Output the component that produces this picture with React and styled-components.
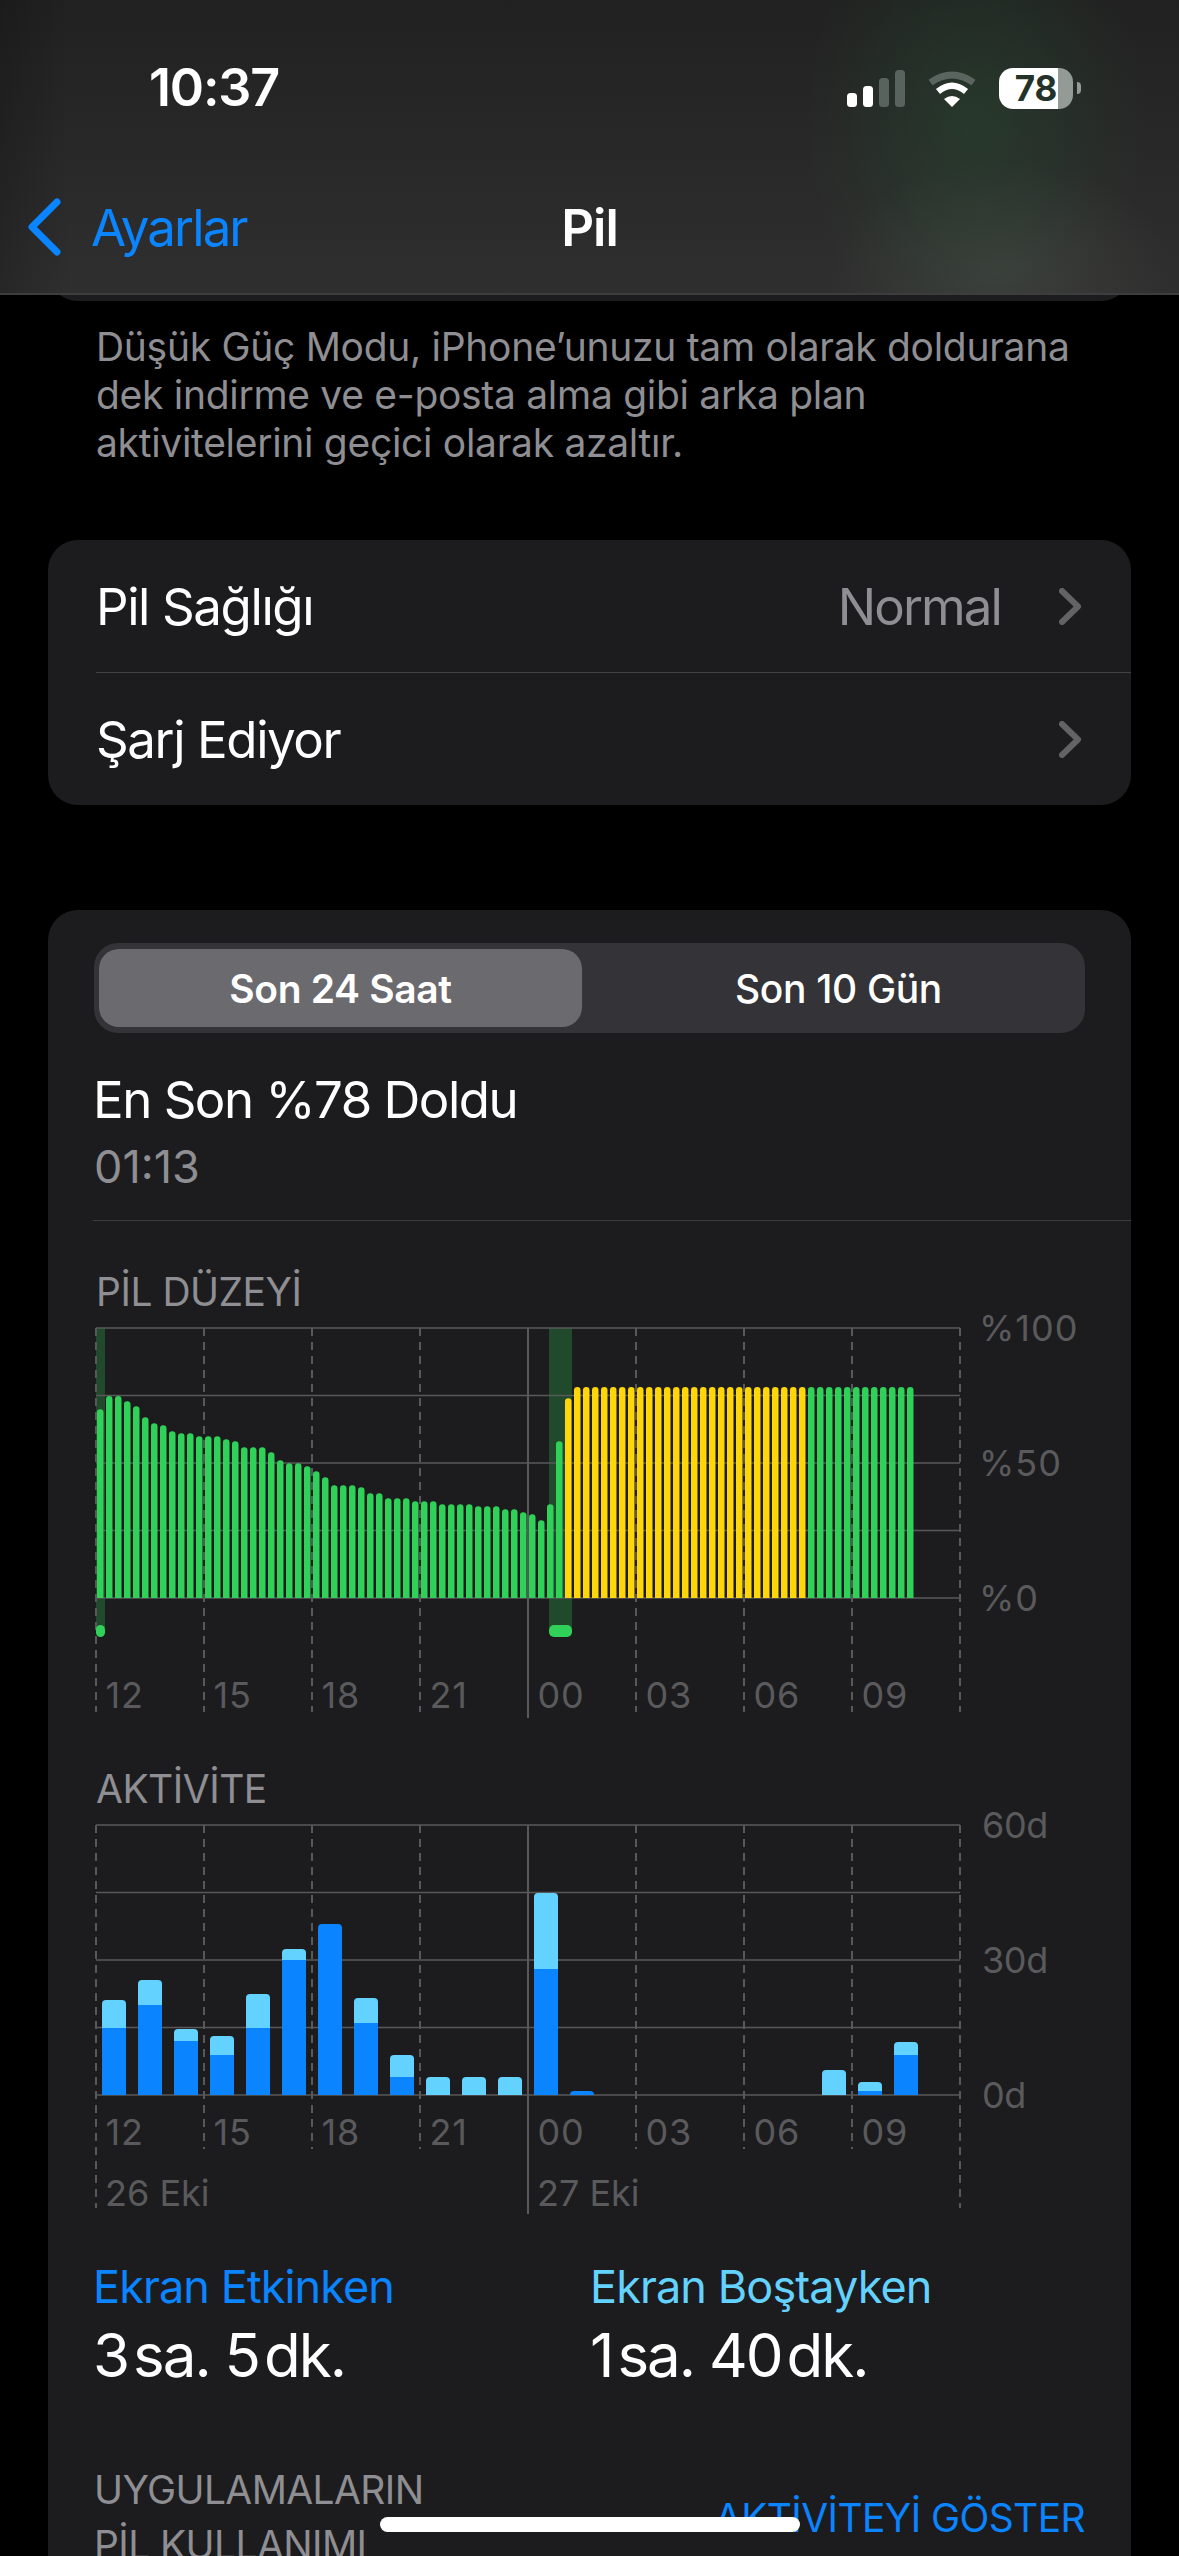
import React from 'react'
import styled, { createGlobalStyle } from 'styled-components'

const GlobalStyle = createGlobalStyle`
  html, body {
    margin: 0;
    padding: 0;
    background: #000;
  }
  body {
    font-family: Inter, "Noto Sans", "Liberation Sans", sans-serif;
    -webkit-font-smoothing: antialiased;
  }
`

const Page = styled.div`
  position: relative;
  width: 1179px;
  height: 2556px;
  overflow: hidden;
  background: #000;
  color: #fff;
`

const Header = styled.header`
  position: relative;
  z-index: 2;
  height: 295px;
  box-sizing: border-box;
  border-bottom: 2px solid #3d3d3d;
  background:
    radial-gradient(ellipse 170px 240px at 975px 120px, rgba(40, 80, 50, 0.42), rgba(40, 80, 50, 0) 100%),
    radial-gradient(ellipse 170px 110px at 1000px 270px, rgba(90, 90, 85, 0.35), rgba(90, 90, 85, 0) 100%),
    linear-gradient(90deg, rgba(0, 0, 0, 0.18), rgba(0, 0, 0, 0) 70px),
    linear-gradient(180deg, #212121 0%, #2f2f2f 100%);
`

const StatusRow = styled.div`
  display: flex;
  align-items: center;
  justify-content: space-between;
  padding: 53px 98px 0 149px;
  height: 70px;
`

const Time = styled.div`
  font-size: 52px;
  font-weight: 600;
  line-height: 70px;
  letter-spacing: -1.2px;
`

const StatusIcons = styled.div`
  display: flex;
  align-items: center;
  gap: 22px;
`

const Battery = styled.div`
  position: relative;
  width: 74px;
  height: 41px;
  border-radius: 14px;
  background: linear-gradient(90deg, #fff 59px, #949b97 59px);
  color: #24332a;
  font-size: 35px;
  font-weight: 700;
  line-height: 41px;
  text-align: center;
  margin-right: 8px;

  &::after {
    content: '';
    position: absolute;
    right: -8px;
    top: 14px;
    width: 4px;
    height: 12px;
    border-radius: 0 6px 6px 0;
    background: #949b97;
  }
`

const NavRow = styled.nav`
  display: grid;
  grid-template-columns: 1fr auto 1fr;
  align-items: center;
  height: 62px;
  margin-top: 73px;
`

const BackLink = styled.div`
  display: flex;
  align-items: center;
  gap: 30px;
  padding-left: 28px;
  color: #0a84ff;
  font-size: 51px;
  letter-spacing: -1.9px;
`

const NavTitle = styled.div`
  font-size: 51px;
  font-weight: 600;
  letter-spacing: -1px;
`

const Sliver = styled.div`
  height: 32px;
  margin: -26px 48px 0;
  border-radius: 0 0 30px 30px;
  background: #1c1c1e;
`

const Footnote = styled.p`
  margin: 22px 60px 0 96px;
  color: #8e8e93;
  font-size: 39px;
  line-height: 48px;
  letter-spacing: -0.3px;
  white-space: nowrap;
`

const Card = styled.section`
  margin: ${p => p.$top}px 48px 0;
  border-radius: 30px;
  background: #1c1c1e;
  overflow: hidden;
`

const Row = styled.div`
  display: flex;
  align-items: center;
  justify-content: space-between;
  height: 132px;
  padding: 0 49px 0 48px;
  font-size: 51px;
  letter-spacing: -1.4px;
`

const RowValue = styled.span`
  display: flex;
  align-items: center;
  gap: 58px;
  color: #8e8e93;
  letter-spacing: -1.9px;
`

const RowDivider = styled.div`
  height: 1px;
  margin-left: 48px;
  background: #434345;
`

const DetailCard = styled(Card)`
  padding-top: 33px;
  height: 1700px;
`

const Segments = styled.div`
  display: grid;
  grid-template-columns: 1fr 1fr;
  column-gap: 15px;
  height: 90px;
  box-sizing: border-box;
  margin: 0 46px;
  padding: 6px 5px;
  border-radius: 24px;
  background: #333338;
`

const Segment = styled.div`
  display: flex;
  align-items: center;
  justify-content: center;
  border-radius: 20px;
  background: ${p => (p.$active ? '#6a6a6f' : 'transparent')};
  font-size: 39px;
  font-weight: ${p => (p.$active ? 600 : 500)};
  letter-spacing: -0.35px;
`

const ChargeTitle = styled.div`
  margin: 37px 45px 0;
  font-size: 51px;
  line-height: 60px;
  letter-spacing: -1.5px;
`

const ChargeTime = styled.div`
  margin: 10px 46px 0;
  color: #8e8e93;
  font-size: 45px;
  line-height: 54px;
  letter-spacing: 0;
`

const Separator = styled.div`
  height: 1px;
  margin: 26px 0 0 45px;
  background: #3c3c3e;
`

const ChartLabel = styled.div`
  margin: ${p => p.$top}px 48px 0;
  color: #8e8e93;
  font-size: 39px;
  line-height: 48px;
  letter-spacing: -0.5px;
`

const ChartSvg = styled.svg`
  display: block;
  overflow: visible;

  text {
    fill: #5a5a5d;
    font-size: 36px;
  }
`

const Totals = styled.div`
  display: grid;
  grid-template-columns: 497px 1fr;
  margin: 44px 45px 0;
`

const TotalName = styled.div`
  color: ${p => p.$color};
  font-size: 45px;
  line-height: 54px;
  letter-spacing: -0.9px;
`

const TotalValue = styled.div`
  margin-top: 5px;
  font-size: 60px;
  line-height: 72px;
  letter-spacing: -2px;
`

const Unit = styled.span`
  margin-left: 5px;
`

const UsageRow = styled.div`
  display: flex;
  align-items: center;
  justify-content: space-between;
  margin: 71px 46px 0;
`

const UsageTitle = styled.div`
  color: #8e8e93;
  font-size: 39px;
  line-height: 55px;
  letter-spacing: -0.6px;
`

const UsageLink = styled.div`
  color: #0a84ff;
  font-size: 39px;
  letter-spacing: -0.6px;
`

const HomeIndicator = styled.div`
  position: absolute;
  left: 380px;
  top: 2517px;
  width: 420px;
  height: 15px;
  border-radius: 8px;
  background: #fff;
`

// tops read off the reference, px above the 0 line
const levelTops = [478, 438, 438, 454, 469, 502, 520, 526, 544, 550, 550, 559, 559, 559, 568, 574, 592, 592, 592, 607, 631, 640, 640, 649, 664, 682, 706, 706, 706, 712, 730, 730, 745, 745, 745, 754, 754, 754, 763, 763, 763, 763, 769, 769, 769, 778, 778, 787, 793, 811, 763, 574]
const levels = [
  ...levelTops.map(t => ({ h: (1044 - t) / 3, color: '#30d158' })),
  { h: (1044 - 445) / 3, color: '#ffd60a' },
  ...Array(26).fill({ h: 211, color: '#ffd60a' }),
  ...Array(12).fill({ h: 211, color: '#30d158' }),
]

// [bar index, total height, screen-on height]
const activity = [
  [0, 95, 67], [1, 115, 90], [2, 66, 54], [3, 59, 40], [4, 101, 67], [5, 146, 135],
  [6, 171, 171], [7, 97, 72], [8, 40, 18], [9, 18, 0], [10, 18, 0], [11, 18, 0],
  [12, 202, 126], [13, 4, 4], [20, 25, 0], [21, 13, 4], [22, 53, 40],
]

const hours = ['12', '15', '18', '21', '00', '03', '06', '09']
const LEFT = 48
const columnX = i => 96 + 108 * i - LEFT

const topRounded = (x, bottom, w, h, r) => {
  const rr = Math.min(r, h)
  return `M${x} ${bottom}V${bottom - h + rr}Q${x} ${bottom - h} ${x + rr} ${bottom - h}H${x + w - rr}Q${x + w} ${bottom - h} ${x + w} ${bottom - h + rr}V${bottom}Z`
}

const Grid = ({ top, dashEnd, edgeEnd, solidEnd }) => (
  <g stroke="#58585a">
    {[0, 1, 2, 3, 4].map(i => (
      <line key={i} x1={columnX(0)} x2={columnX(8)} y1={top + 67.5 * i} y2={top + 67.5 * i} strokeWidth="1.6" />
    ))}
    {[0, 1, 2, 3, 5, 6, 7, 8].map(i => (
      <line
        key={i}
        x1={columnX(i)}
        x2={columnX(i)}
        y1={top}
        y2={i === 0 || i === 8 ? edgeEnd : dashEnd}
        strokeWidth="2"
        strokeDasharray="8 6"
      />
    ))}
    <line x1={columnX(4)} x2={columnX(4)} y1={top} y2={solidEnd} strokeWidth="2" />
  </g>
)

const HourLabels = ({ y }) =>
  hours.map((h, i) => (
    <text key={h} x={columnX(i) + 9.5} y={y} letterSpacing="0.8">{h}</text>
  ))

const AxisLabels = ({ labels, top, x, tracking }) =>
  labels.map((l, i) => (
    <text key={l} x={x - LEFT} y={top + 135 * i + 13} letterSpacing={tracking}>{l}</text>
  ))

const LevelChart = () => (
  <ChartSvg width="1083" height="404">
    <rect x={96 - LEFT} y="12" width="9" height="300" fill="#214a2c" />
    <rect x={549 - LEFT} y="12" width="23" height="300" fill="#214a2c" />
    <Grid top={12} dashEnd={396} edgeEnd={396} solidEnd={402} />
    {levels.map((b, i) => (
      <path key={i} d={topRounded(97 + 9 * i - LEFT, 282, 6.5, b.h, 3.2)} fill={b.color} />
    ))}
    <rect x={96 - LEFT} y="309" width="9" height="12" rx="4.5" fill="#30d158" />
    <rect x={549 - LEFT} y="309" width="23" height="12" rx="5" fill="#30d158" />
    <HourLabels y={392} />
    <AxisLabels labels={['%100', '%50', '%0']} top={12} x={979} tracking="1" />
  </ChartSvg>
)

const ActivityChart = () => (
  <ChartSvg width="1083" height="403">
    <Grid top={12} dashEnd={336} edgeEnd={395} solidEnd={401} />
    {activity.map(([i, total, on]) => {
      const x = 102 + 36 * i - LEFT
      return (
        <g key={i}>
          <path d={topRounded(x, 282, 24, total, 4)} fill={on === total ? '#0a84ff' : '#64d2ff'} />
          {on > 0 && on < total && <rect x={x} y={282 - on} width="24" height={on} fill="#0a84ff" />}
        </g>
      )
    })}
    <HourLabels y={332} />
    <text x={columnX(0) + 9} y="393">26 Eki</text>
    <text x={columnX(4) + 9} y="393">27 Eki</text>
    <AxisLabels labels={['60d', '30d', '0d']} top={12} x={982} tracking="-0.4" />
  </ChartSvg>
)

const Chevron = ({ tone }) => (
  <svg width="23" height="37" viewBox="0 0 23 37" fill="none">
    <path d="M3 3l16 15.500L3 34" stroke={tone} strokeWidth="6" strokeLinecap="round" strokeLinejoin="round" />
  </svg>
)

const BackChevron = () => (
  <svg width="33" height="58" viewBox="0 0 33 58" fill="none">
    <path d="M29 4L4 29l25 25" stroke="#0a84ff" strokeWidth="7" strokeLinecap="round" strokeLinejoin="round" />
  </svg>
)

const Signal = () => (
  <svg width="58" height="37" viewBox="0 0 58 37">
    <rect x="0" y="23" width="10" height="14" rx="3.500" fill="#fff" />
    <rect x="16" y="16" width="10" height="21" rx="3.500" fill="#fff" />
    <rect x="32" y="8" width="10" height="29" rx="3.500" fill="#57635c" />
    <rect x="48" y="0" width="10" height="37" rx="3.500" fill="#57635c" />
  </svg>
)

const Wifi = () => (
  <svg width="50" height="37" viewBox="0 0 50 37" fill="none">
    <path d="M3.500 12.500Q25 -2.500 46.500 12.500" stroke="#59655e" strokeWidth="7" />
    <path d="M11 21.500Q25 10 39 21.500" stroke="#fff" strokeWidth="6.500" />
    <path d="M17 29Q25 23 33 29L25 37Z" fill="#fff" />
  </svg>
)

const App = () => (
  <Page>
    <GlobalStyle />
    <Header>
      <StatusRow>
        <Time>10:37</Time>
        <StatusIcons>
          <Signal />
          <Wifi />
          <Battery>78</Battery>
        </StatusIcons>
      </StatusRow>
      <NavRow>
        <BackLink>
          <BackChevron />
          Ayarlar
        </BackLink>
        <NavTitle>Pil</NavTitle>
      </NavRow>
    </Header>
    <Sliver />
    <Footnote>
      Düşük Güç Modu, iPhone’unuzu tam olarak doldurana<br />
      dek indirme ve e-posta alma gibi arka plan<br />
      aktivitelerini geçici olarak azaltır.
    </Footnote>
    <Card $top={73}>
      <Row>
        Pil Sağlığı
        <RowValue>Normal <Chevron tone="#636366" /></RowValue>
      </Row>
      <RowDivider />
      <Row>
        Şarj Ediyor
        <RowValue><Chevron tone="#636366" /></RowValue>
      </Row>
    </Card>
    <DetailCard $top={105}>
      <Segments>
        <Segment $active>Son 24 Saat</Segment>
        <Segment>Son 10 Gün</Segment>
      </Segments>
      <ChargeTitle>En Son %78 Doldu</ChargeTitle>
      <ChargeTime>01:13</ChargeTime>
      <Separator />
      <ChartLabel $top={47}>PİL DÜZEYİ</ChartLabel>
      <LevelChart />
      <ChartLabel $top={45}>AKTİVİTE</ChartLabel>
      <ActivityChart />
      <Totals>
        <div>
          <TotalName $color="#0a84ff">Ekran Etkinken</TotalName>
          <TotalValue>3<Unit>sa.</Unit> 5<Unit>dk.</Unit></TotalValue>
        </div>
        <div>
          <TotalName $color="#64d2ff">Ekran Boştayken</TotalName>
          <TotalValue>1<Unit>sa.</Unit> 40<Unit>dk.</Unit></TotalValue>
        </div>
      </Totals>
      <UsageRow>
        <UsageTitle>UYGULAMALARIN<br />PİL KULLANIMI</UsageTitle>
        <UsageLink>AKTİVİTEYİ GÖSTER</UsageLink>
      </UsageRow>
    </DetailCard>
    <HomeIndicator />
  </Page>
)

export default App
